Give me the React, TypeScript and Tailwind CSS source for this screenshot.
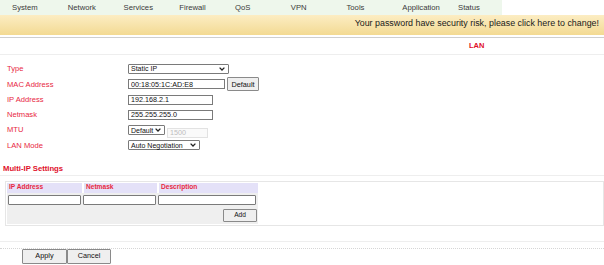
import React from 'react';

const navItems = ['System', 'Network', 'Services', 'Firewall', 'QoS', 'VPN', 'Tools', 'Application', 'Status'];

function Chevron() {
  return (
    <svg width="6" height="4" viewBox="0 0 6 4" className="shrink-0">
      <path d="M0.6 0.6 L3 3 L5.4 0.6" fill="none" stroke="#222" strokeWidth="1.3" />
    </svg>
  );
}

// fake select box, native ones render too big at this scale
function FakeSelect({ value, width }: { value: string; width: string }) {
  return (
    <div className={`${width} h-[10px] border border-[#7a7a7a] rounded-[1px] bg-white flex items-center justify-between gap-[2px] pl-[2px] pr-[3px] text-[7px] leading-none text-[#111]`}>
      <span className="whitespace-nowrap">{value}</span>
      <Chevron />
    </div>
  );
}

function TextBox({ value, width, disabled }: { value?: string; width: string; disabled?: boolean }) {
  return (
    <input
      readOnly
      value={value ?? ''}
      className={`${width} h-[10px] border ${disabled ? 'border-[#e2e2e2] bg-[#fafafa] text-[#bdbdbd]' : 'border-[#7a7a7a] bg-white text-[#111]'} px-[2px] text-[7.2px] leading-none outline-none`}
    />
  );
}

function Row({ label, children }: { label: string; children: React.ReactNode }) {
  return (
    <div className="h-[15.3px] flex items-center">
      <div className="w-[128px] pl-[7px] text-[7.6px] text-[#e8283f]">{label}</div>
      <div className="flex items-center">{children}</div>
    </div>
  );
}

function GrayButton({ label, className }: { label: string; className: string }) {
  return (
    <button className={`${className} border border-[#8a8a8a] bg-[#efefef] rounded-[1px] flex items-center justify-center leading-none text-[#111]`}>
      {label}
    </button>
  );
}

export default function App() {
  return (
    <div className="w-[604px] h-[265px] bg-white overflow-hidden" style={{ fontFamily: '"Liberation Sans", Arial, sans-serif' }}>
      {/* top menu */}
      <div className="w-[502px] h-[15px] bg-[#eef7ec] flex items-center">
        {navItems.map((n) => (
          <div key={n} className="w-[55.75px] pl-[12px] text-[7.7px] text-[#3a3a3a] leading-none">
            {n}
          </div>
        ))}
      </div>

      {/* warning */}
      <div className="h-[20px] bg-gradient-to-b from-[#fcedc3] to-[#f3da92] flex items-center justify-end pr-[5px] pb-[4px]">
        <span className="text-[8.9px] text-[#1a1a1a] leading-none">Your password have security risk, please click here to change!</span>
      </div>
      <div className="h-[3px] border-b border-[#cfcfcf]"></div>

      <div className="h-[17px] border-b border-[#eeeeee] flex items-center pl-[469px]">
        <span className="text-[7.5px] font-bold text-[#e0102a] leading-none">LAN</span>
      </div>

      <div className="pt-[6.3px]">
        <Row label="Type">
          <FakeSelect value="Static IP" width="w-[101px]" />
        </Row>
        <Row label="MAC Address">
          <TextBox value="00:18:05:1C:AD:E8" width="w-[97px]" />
          <GrayButton label="Default" className="ml-[2px] w-[32px] h-[14px] text-[7.3px]" />
        </Row>
        <Row label="IP Address">
          <TextBox value="192.168.2.1" width="w-[85px]" />
        </Row>
        <Row label="Netmask">
          <TextBox value="255.255.255.0" width="w-[85px]" />
        </Row>
        <Row label="MTU">
          <FakeSelect value="Default" width="w-[37px]" />
          <div className="ml-[2px]">
            <TextBox value="1500" width="w-[41px]" disabled />
          </div>
        </Row>
        <Row label="LAN Mode">
          <FakeSelect value="Auto Negotiation" width="w-[72px]" />
        </Row>
      </div>

      {/* multi ip */}
      <div className="mt-[10.5px] h-[12px] border-b border-[#eeeeee] pl-[3px] flex items-center">
        <span className="text-[7.7px] font-bold text-[#e0102a] leading-none">Multi-IP Settings</span>
      </div>

      <div className="mt-[5px] ml-[5px] border border-[#e6e6e6] pl-[1px] py-[1px]">
        <div className="w-[251px] bg-[#efefef]">
          <div className="grid grid-cols-[75px_73px_99px] gap-x-[2px] bg-white">
            {['IP Address', 'Netmask', 'Description'].map((h) => (
              <div key={h} className="h-[10px] bg-[#e4e1f8] pl-[2px] flex items-center text-[6.6px] font-bold text-[#e8283f] leading-none">
                {h}
              </div>
            ))}
          </div>
          <div className="flex items-center gap-x-[2px] pt-[2px] pl-[1px]">
            <TextBox width="w-[73px] rounded-[1px]" />
            <TextBox width="w-[73px] rounded-[1px]" />
            <TextBox width="w-[98px] rounded-[1px]" />
          </div>
          <div className="flex justify-end pr-[1px] pt-[4px] pb-[2px]">
            <GrayButton label="Add" className="w-[34px] h-[13px] text-[6.6px]" />
          </div>
        </div>
      </div>

      <div className="mt-[15px] border-b border-[#eeeeee]"></div>
      <div className="mt-[6px] border-b border-dotted border-[#d6d6d6]"></div>
      <div className="flex pl-[22px]">
        <GrayButton label="Apply" className="w-[45px] h-[15px] text-[7.3px]" />
        <GrayButton label="Cancel" className="w-[44px] h-[15px] text-[7.3px]" />
      </div>
    </div>
  );
}
